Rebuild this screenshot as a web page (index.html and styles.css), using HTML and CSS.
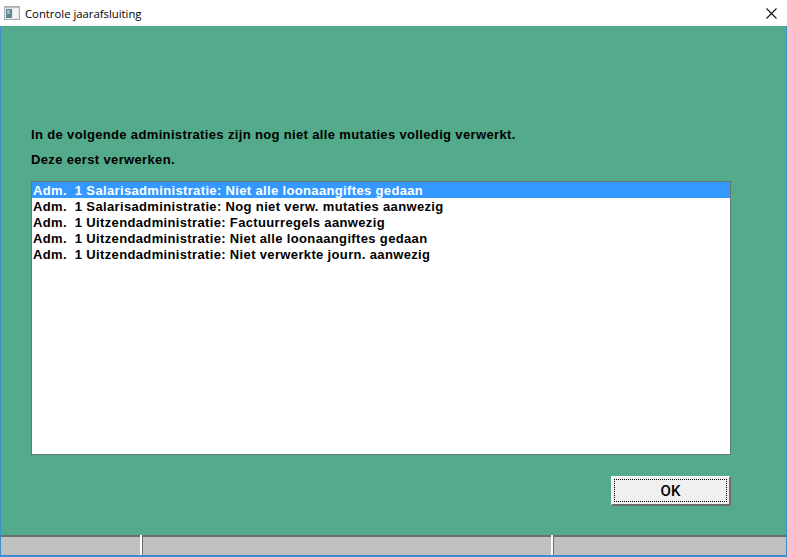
FILE: index.html
```html
<!DOCTYPE html>
<html lang="nl">
<head>
<meta charset="utf-8">
<title>Controle jaarafsluiting</title>
<link rel="stylesheet" href="styles.css">
</head>
<body>
<div class="window">
  <header class="titlebar">
    <svg class="appicon" width="16" height="16" viewBox="0 0 16 16">
      <rect x="0.5" y="1.5" width="15" height="13" fill="#e6e8e8" stroke="#a9aeb2"/>
      <rect x="2" y="4" width="6" height="9" fill="#5d8a92"/>
      <rect x="3" y="5" width="3" height="4" fill="#8fc4b4"/>
      <rect x="9" y="4" width="5" height="9" fill="#f4f4f4"/>
      <rect x="1" y="2" width="14" height="1" fill="#b9c0c6"/>
    </svg>
    <span class="title">Controle jaarafsluiting</span>
    <svg class="close" width="11" height="11" viewBox="0 0 11 11"><path d="M0.5 0.5L10.5 10.5M10.5 0.5L0.5 10.5" stroke="#111" stroke-width="1.1" fill="none"/></svg>
  </header>
  <main class="client">
    <div class="content">
      <p class="msg first">In de volgende administraties zijn nog niet alle mutaties volledig verwerkt.</p>
      <p class="msg second">Deze eerst verwerken.</p>
      <ul class="list">
        <li class="item selected">Adm.&nbsp; 1 Salarisadministratie: Niet alle loonaangiftes gedaan</li>
        <li class="item">Adm.&nbsp; 1 Salarisadministratie: Nog niet verw. mutaties aanwezig</li>
        <li class="item">Adm.&nbsp; 1 Uitzendadministratie: Factuurregels aanwezig</li>
        <li class="item">Adm.&nbsp; 1 Uitzendadministratie: Niet alle loonaangiftes gedaan</li>
        <li class="item">Adm.&nbsp; 1 Uitzendadministratie: Niet verwerkte journ. aanwezig</li>
      </ul>
      <div class="actions"><button class="ok" type="button"><span class="oklabel">OK</span></button></div>
    </div>
    <footer class="status">
      <div class="cell c1"></div>
      <div class="sep"></div>
      <div class="cell c2"></div>
      <div class="sep"></div>
      <div class="cell c3"></div>
    </footer>
  </main>
</div>
</body>
</html>
```
FILE: styles.css
```css
* { box-sizing: border-box; }
html, body { margin: 0; padding: 0; }
body { width: 787px; height: 557px; overflow: hidden; font-family: "Liberation Sans", Arial, sans-serif; }
.window { width: 787px; height: 557px; display: flex; flex-direction: column; background: #fff; }
.titlebar { height: 26px; flex: none; display: flex; align-items: center; padding: 0 10px 0 4px; background: #fff; }
.appicon { flex: none; margin-right: 5px; }
.title { flex: 1; font-size: 11.3px; color: #000; font-family: "Open Sans", "Liberation Sans", sans-serif; }
.close { flex: none; }
.client { flex: 1; display: flex; flex-direction: column; background: #53ab8b; border: 1px solid #3a8fd0; border-top: 0; border-bottom-width: 2px; }
.content { flex: 1; padding: 101px 55px 0 30px; display: flex; flex-direction: column; }
.msg { margin: 0; font-size: 13px; font-weight: 700; line-height: 16px; color: #000; letter-spacing: 0.35px; }
.second { margin-top: 9px; }
.list { list-style: none; margin: 13px 0 0; padding: 0; height: 274px; background: #fff; border: 1px solid #66776f; }
.item { height: 16px; line-height: 18px; padding-left: 1px; font-size: 13px; font-weight: 700; letter-spacing: 0.35px; color: #000; white-space: nowrap; }
.selected { background: #3399ff; color: #fff; }
.actions { display: flex; justify-content: flex-end; margin-top: 21px; }
.ok { width: 120px; height: 30px; padding: 2px; background: #f0f0f0; border: 1px solid; border-width: 1px 2px 2px 1px; border-color: #fff #6b6f6d #6b6f6d #fff; font: 500 15px Roboto, "Liberation Sans", sans-serif; color: #000; }
.oklabel { display: flex; align-items: center; justify-content: center; height: 100%; border: 1px dotted #000; }
.status { height: 20px; flex: none; display: flex; background: #c0c0c0; }
.cell { height: 100%; border-top: 2px solid #6e6e6e; }
.sep { width: 2px; flex: none; background: #fff; }
.c1 { width: 139px; }
.c2 { width: 409px; border-left: 1px solid #6e6e6e; }
.c3 { flex: 1; border-left: 1px solid #6e6e6e; }
```
